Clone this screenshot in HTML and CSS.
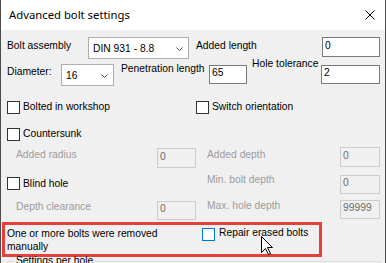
FILE: index.html
```html
<!DOCTYPE html>
<html lang="en">
<head>
    <meta charset="UTF-8">
    <title>Advanced bolt settings</title>
    <link rel="stylesheet" href="styles.css">
</head>
<body>
    <div class="dialog">
        <div class="titlebar">
            <span class="title">Advanced bolt settings</span>
            <svg class="close" width="10" height="10" viewBox="0 0 10 10">
                <path d="M0.5 0.5 L9.5 9.5 M9.5 0.5 L0.5 9.5" stroke="#000" stroke-width="1" fill="none"/>
            </svg>
        </div>
        <div class="content">
            <div class="row row-assembly">
                <span class="lbl lbl-assembly">Bolt assembly</span>
                <div class="combo combo-assembly">
                    <span>DIN 931 - 8.8</span>
                    <svg class="chevron" width="7" height="4" viewBox="0 0 7 4"><polyline points="0.5,0.5 3.5,3.5 6.5,0.5" fill="none" stroke="#444" stroke-width="1"/></svg>
                </div>
                <span class="lbl lbl-added">Added length</span>
                <div class="field field-added">0</div>
            </div>
            <div class="row row-diameter">
                <span class="lbl lbl-diameter">Diameter:</span>
                <div class="combo combo-diameter">
                    <span>16</span>
                    <svg class="chevron" width="7" height="4" viewBox="0 0 7 4"><polyline points="0.5,0.5 3.5,3.5 6.5,0.5" fill="none" stroke="#444" stroke-width="1"/></svg>
                </div>
                <span class="lbl lbl-penetration">Penetration length</span>
                <div class="field field-pen">65</div>
                <span class="lbl lbl-tolerance">Hole tolerance</span>
                <div class="field field-tol">2</div>
            </div>

            <div class="options">
                <label class="check"><span class="box"></span><span>Bolted in workshop</span></label>
                <label class="check"><span class="box"></span><span>Switch orientation</span></label>

                <label class="check"><span class="box"></span><span>Countersunk</span></label>
                <div></div>

                <div class="pair pair-left pair-radius">
                    <span class="lbl dim">Added radius</span>
                    <div class="field off">0</div>
                </div>
                <div class="pair pair-right pair-depth">
                    <span class="lbl dim">Added depth</span>
                    <div class="field off">0</div>
                </div>

                <label class="check check-blind"><span class="box"></span><span>Blind hole</span></label>
                <div class="pair pair-right pair-minbolt">
                    <span class="lbl dim">Min. bolt depth</span>
                    <div class="field off">0</div>
                </div>

                <div class="pair pair-left pair-clearance">
                    <span class="lbl dim">Depth clearance</span>
                    <div class="field off">0</div>
                </div>
                <div class="pair pair-right pair-maxhole">
                    <span class="lbl dim">Max. hole depth</span>
                    <div class="field off">99999</div>
                </div>
            </div>

            <div class="repair">
                <p class="repair-msg">One or more bolts were removed manually</p>
                <label class="check check-hover"><span class="box"></span><span>Repair erased bolts</span></label>
            </div>

            <fieldset class="group">
                <legend>Settings per hole</legend>
            </fieldset>
        </div>

        <svg class="cursor" width="13" height="20" viewBox="0 0 13 20">
            <path d="M0.5 0.5 V16.5 L4.5 12.5 L7.5 18.5 L9.5 17.5 L6.5 11.5 L11.5 11.5 Z" fill="#fff" stroke="#000" stroke-width="1" stroke-linejoin="miter"/>
        </svg>
    </div>
</body>
</html>
```

FILE: styles.css
```css
body {
    margin: 0;
    background: #f0f0f0;
    font-family: "Liberation Sans", Arial, sans-serif;
    font-size: 10.3px;
    line-height: 12px;
    color: #000;
}
.dialog {
    position: relative;
    width: 386px;
    height: 263px;
    box-sizing: border-box;
    border-left: 1px solid #4d4d4d;
    border-right: 1px solid #4d4d4d;
    background: #f0f0f0;
    overflow: hidden;
}
.titlebar {
    height: 30px;
    background: #fff;
    display: flex;
    align-items: center;
    justify-content: space-between;
    padding: 0 10px 0 8px;
}
.title {
    font-family: "Noto Sans", sans-serif;
    font-size: 11.3px;
}
.content {
    padding: 7px 0 0 6px;
}
.row {
    display: flex;
    align-items: flex-start;
}
.row-assembly {
    height: 22px;
}
.row-diameter {
    height: 23px;
    margin-top: 4px;
}
.lbl {
    white-space: nowrap;
}
.lbl-assembly {
    width: 81px;
    margin-top: 3px;
}
.lbl-added {
    width: 126px;
    margin-left: 7px;
    margin-top: 3px;
}
.lbl-diameter {
    width: 54px;
    margin-top: 3px;
}
.lbl-penetration {
    width: 88px;
    margin-left: 7px;
}
.lbl-tolerance {
    width: 69px;
    margin-left: 5px;
    margin-top: -5px;
}
.combo {
    box-sizing: border-box;
    height: 22px;
    border: 1px solid #adadad;
    background: #fff;
    display: flex;
    align-items: center;
    justify-content: space-between;
    padding: 1px 5px 0 4px;
}
.combo-assembly {
    width: 101px;
}
.combo-diameter {
    width: 53px;
    margin-top: 1px;
}
.field {
    box-sizing: border-box;
    height: 20px;
    border: 1px solid #7a7a7a;
    background: #fff;
    padding: 2px 2px 0;
    white-space: nowrap;
}
.field-added {
    width: 58px;
}
.field-pen {
    width: 38px;
    height: 19px;
    margin-top: 2px;
    padding-top: 1px;
}
.field-tol {
    width: 59px;
    height: 19px;
    margin-top: 2px;
    padding-top: 1px;
}
.field.off {
    border-color: #cccccc;
    background: #f0f0f0;
    color: #6d6d6d;
}
.options {
    display: grid;
    grid-template-columns: 189px 184px;
    grid-template-rows: 27px 19px 28px 25px 19px;
    margin-top: 15px;
}
.check {
    display: flex;
    align-items: flex-start;
    gap: 3px;
    white-space: nowrap;
}
.check .box {
    box-sizing: border-box;
    width: 13px;
    height: 13px;
    border: 1px solid #333;
    background: #fff;
    flex: none;
}
.check-blind .box {
    margin-top: 2px;
}
.check-blind span + span {
    margin-top: 3px;
}
.pair {
    display: flex;
    justify-content: space-between;
    align-items: flex-start;
}
.pair-left .lbl {
    padding-left: 9px;
}
.pair-right .lbl {
    padding-left: 11px;
}
.pair-left .field {
    width: 39px;
}
.pair-right .field {
    width: 40px;
}
.dim {
    color: #9d9d9d;
}
.pair-radius .lbl,
.pair-depth .lbl {
    margin-top: 2px;
}
.pair-radius .field {
    margin-top: 1px;
}
.pair-minbolt .lbl {
    margin-top: -1px;
}
.pair-minbolt .field,
.pair-clearance .field,
.pair-maxhole .field {
    height: 19px;
    padding-top: 1px;
}
.pair-clearance .lbl,
.pair-clearance .field {
    margin-top: 1px;
}
.repair {
    display: flex;
    align-items: flex-start;
    box-sizing: border-box;
    width: 320px;
    height: 35px;
    margin: 3px 0 0 -5px;
    padding: 2px 0 0 2px;
    border: 3px solid #e5403a;
}
.repair-msg {
    margin: 0 30px 0 0;
    width: 165px;
    line-height: 13px;
}
.check-hover {
    gap: 4px;
}
.check-hover .box {
    margin-top: 1px;
    border-color: #0078d7;
}
.group {
    margin: -2px 4px 0 0;
    padding: 0;
    min-width: 0;
    height: 30px;
    border: 1px solid #dcdcdc;
}
.group legend {
    margin-left: 6px;
    padding: 0 2px;
    line-height: 12px;
}
.cursor {
    position: absolute;
    left: 260px;
    top: 236px;
}
```
